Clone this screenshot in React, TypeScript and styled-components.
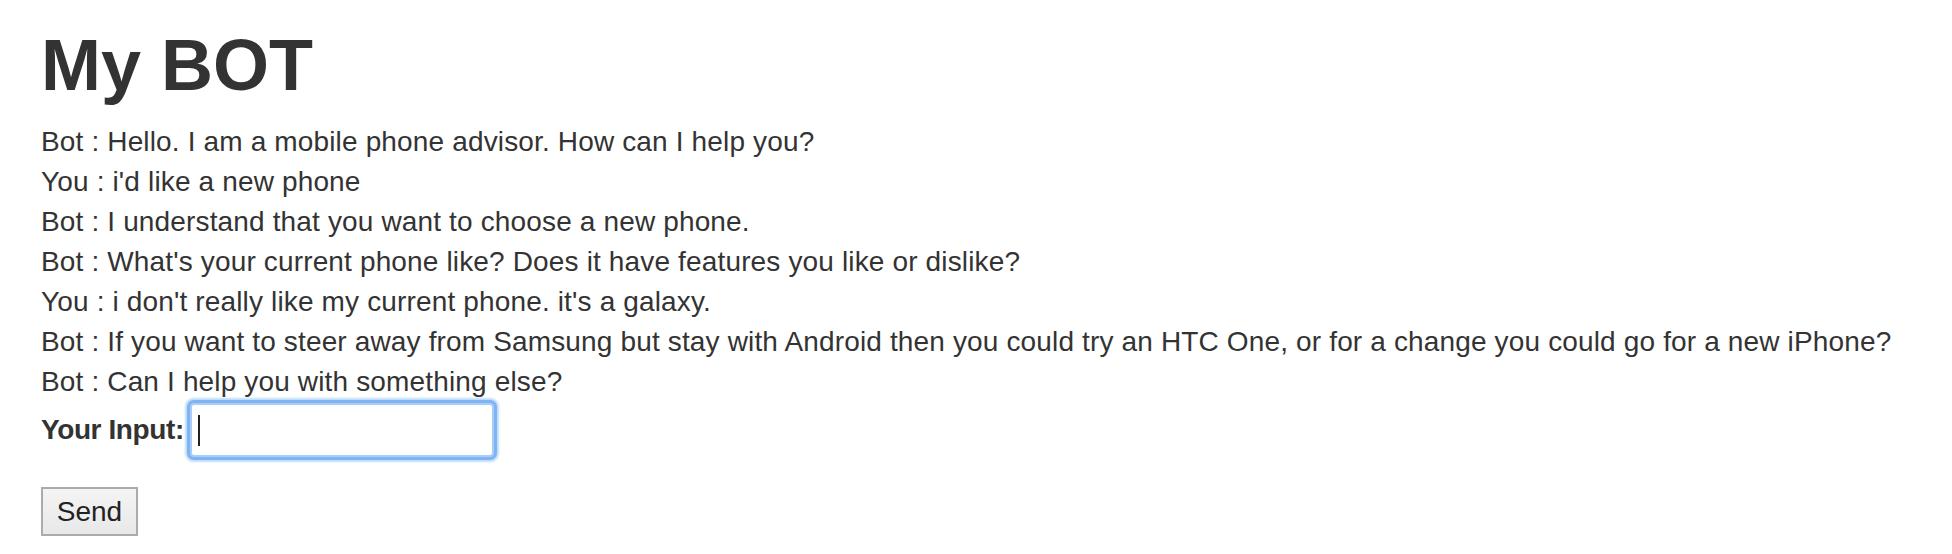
import React from "react";
import styled, { createGlobalStyle } from "styled-components";

const GlobalStyle = createGlobalStyle`
  html, body {
    margin: 0;
    padding: 0;
    background: #ffffff;
  }
  body {
    font-family: "Liberation Sans", Arial, sans-serif;
    color: #333333;
  }
`;

const Page = styled.div`
  padding: 26px 40px 0 41px;
`;

const Title = styled.h1`
  margin: 0 0 17px 0;
  font-size: 72px;
  line-height: 79px;
  font-weight: 700;
  color: #333333;
`;

const Transcript = styled.div`
  display: flex;
  flex-direction: column;
`;

const Line = styled.div`
  font-size: 28px;
  line-height: 40px;
  letter-spacing: 0.15px;
  white-space: nowrap;
`;

const InputRow = styled.form`
  display: flex;
  align-items: center;
  gap: 6px;
  height: 55px;
`;

const Label = styled.label`
  font-size: 28px;
  line-height: 40px;
  font-weight: 700;
  letter-spacing: -0.4px;
`;

const FieldWrap = styled.div`
  position: relative;
  display: flex;
`;

const TextField = styled.input`
  box-sizing: border-box;
  width: 304px;
  height: 54px;
  margin: 0;
  padding: 0 6px;
  font-family: "Liberation Sans", Arial, sans-serif;
  font-size: 28px;
  color: #333333;
  background: #ffffff;
  border: 2px solid #a9cdf7;
  border-radius: 4px;
  box-shadow: 0 0 0 3px #7fb4f3, 0 0 2px 5px rgba(150, 195, 245, 0.6);
  outline: none;
  caret-color: transparent;
`;

const Caret = styled.span`
  position: absolute;
  left: 8px;
  top: 12px;
  width: 2px;
  height: 31px;
  background: #222222;
  pointer-events: none;
`;

const SendButton = styled.button`
  margin-top: 30px;
  box-sizing: border-box;
  width: 97px;
  height: 49px;
  padding: 0;
  font-family: "Liberation Sans", Arial, sans-serif;
  font-size: 28px;
  color: #222222;
  background: linear-gradient(#f4f4f4, #e8e8e8);
  border: 2px solid #ababab;
  border-radius: 0;
  cursor: pointer;
`;

const messages: { who: string; text: string }[] = [
  { who: "Bot", text: "Hello. I am a mobile phone advisor. How can I help you?" },
  { who: "You", text: "i'd like a new phone" },
  { who: "Bot", text: "I understand that you want to choose a new phone." },
  { who: "Bot", text: "What's your current phone like? Does it have features you like or dislike?" },
  { who: "You", text: "i don't really like my current phone. it's a galaxy." },
  {
    who: "Bot",
    text: "If you want to steer away from Samsung but stay with Android then you could try an HTC One, or for a change you could go for a new iPhone?",
  },
  { who: "Bot", text: "Can I help you with something else?" },
];

export default function App() {
  return (
    <>
      <GlobalStyle />
      <Page>
        <Title>My BOT</Title>
        <Transcript>
          {messages.map((m, i) => (
            <Line key={i}>
              {m.who} : {m.text}
            </Line>
          ))}
        </Transcript>
        <InputRow onSubmit={(e) => e.preventDefault()}>
          <Label htmlFor="userInput">Your Input:</Label>
          <FieldWrap>
            <TextField id="userInput" type="text" />
            <Caret />
          </FieldWrap>
        </InputRow>
        <SendButton type="button">Send</SendButton>
      </Page>
    </>
  );
}
